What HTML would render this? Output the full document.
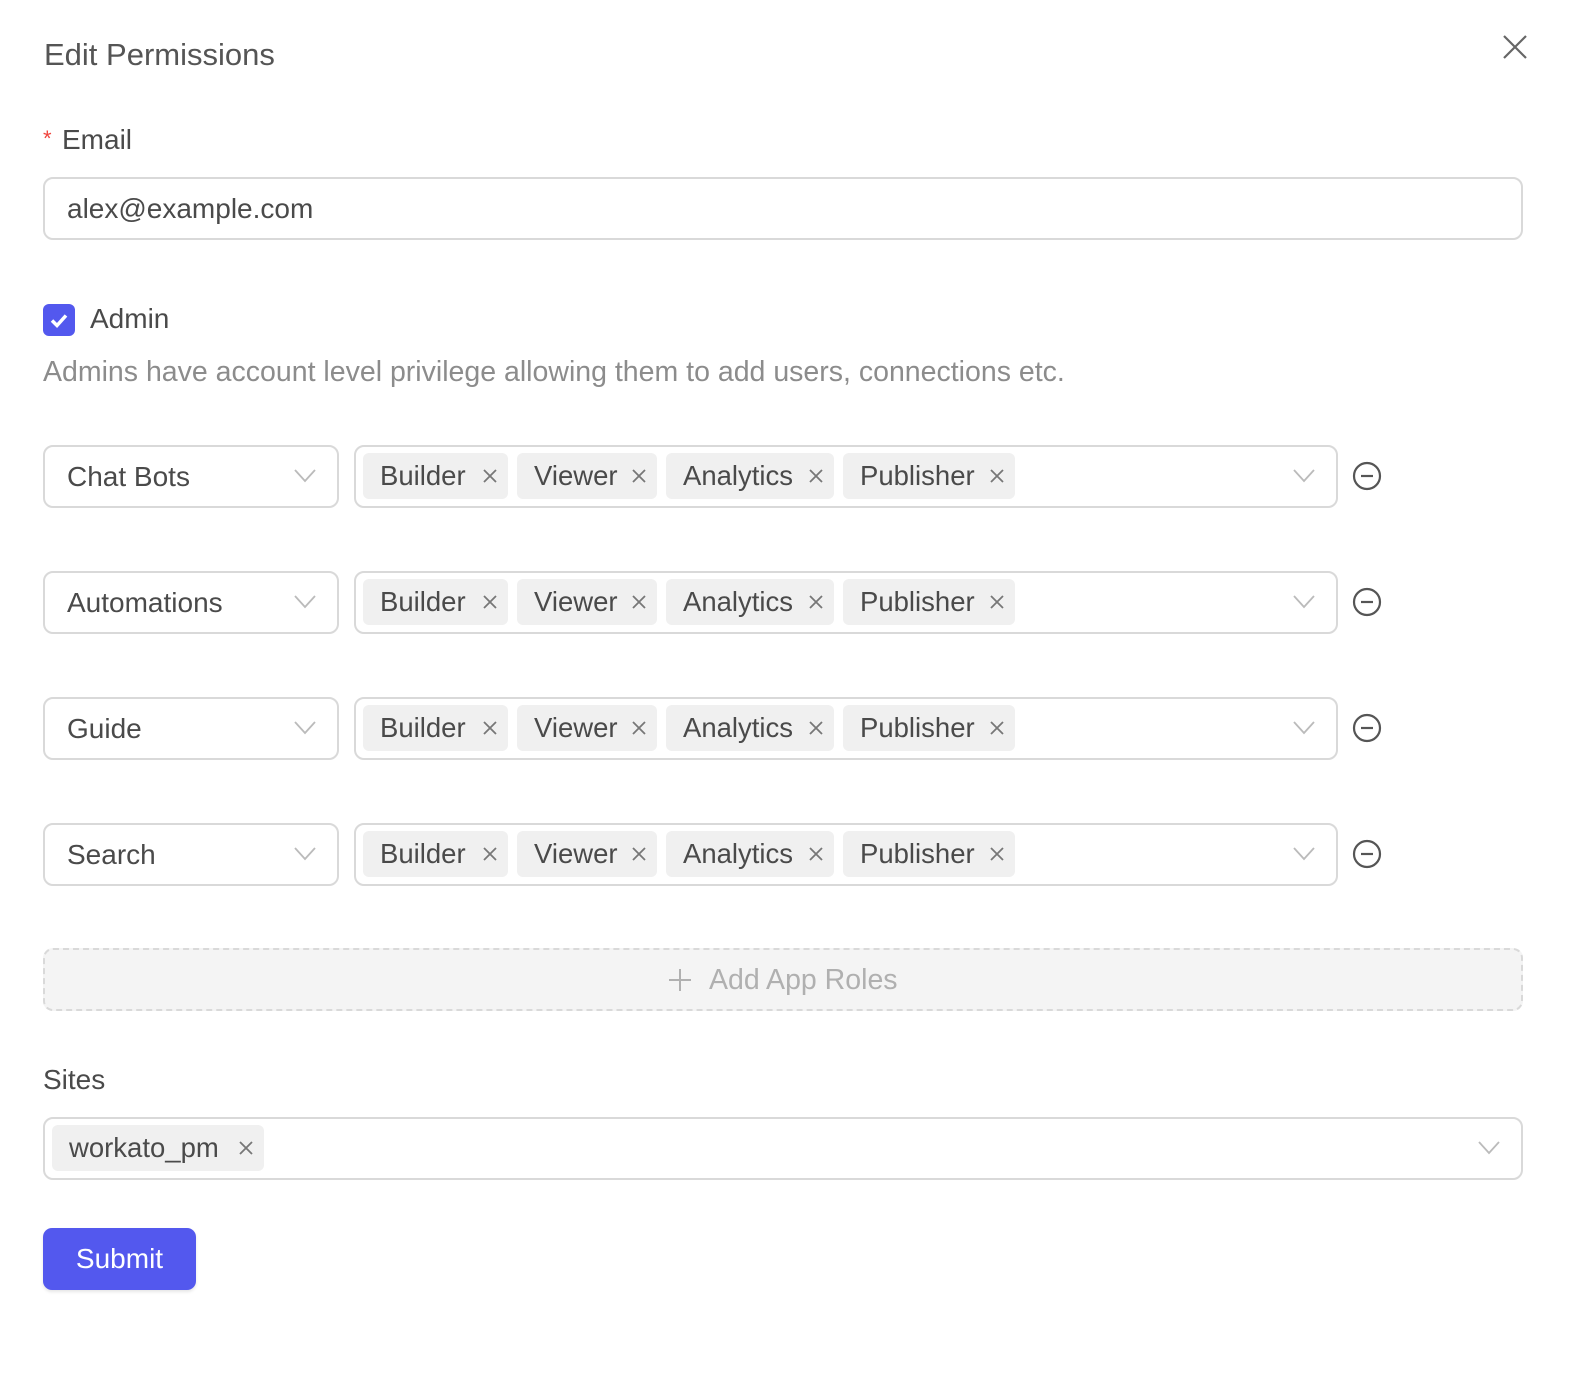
<!DOCTYPE html>
<html><head><meta charset="utf-8"><style>
*{box-sizing:border-box;margin:0;padding:0}
body{width:1594px;height:1394px;background:#fff;font-family:"Liberation Sans",sans-serif;color:#4a4a4a;position:relative;overflow:hidden}
.a{position:absolute}
.t{font-size:28px;line-height:1;white-space:nowrap}
.box{position:absolute;border:2px solid #d9d9d9;border-radius:10px;background:#fff}
.tag{position:absolute;height:46px;background:#f0f0f0;border-radius:6px;font-size:27.5px;line-height:46px;padding-left:17px;color:#4a4a4a;white-space:nowrap}
.tag svg{position:absolute;right:10px;top:15px}
.chev{position:absolute}
</style></head><body>
<div class="a t" style="left:44px;top:39px;font-size:31px;color:#555">Edit Permissions</div>
<svg class="a" style="left:1502px;top:34px" width="26" height="26" viewBox="0 0 26 26"><path d="M2 2L24 24M24 2L2 24" stroke="#666" stroke-width="2.2" fill="none"/></svg>
<div class="a t" style="left:43px;top:128px;color:#f0443d;font-size:22px">*</div>
<div class="a t" style="left:62px;top:126px">Email</div>
<div class="box" style="left:43px;top:177px;width:1480px;height:63px"></div>
<div class="a t" style="left:67px;top:195px">alex@example.com</div>
<div class="a" style="left:43px;top:304px;width:32px;height:32px;background:#5358ee;border-radius:6px"></div>
<svg class="a" style="left:43px;top:304px" width="32" height="32"><path d="M9 16.5l5 5 9-10" stroke="#fff" stroke-width="3.5" fill="none"/></svg>
<div class="a t" style="left:90px;top:305px">Admin</div>
<div class="a t" style="left:43px;top:358px;color:#8c8c8c;font-size:28.5px">Admins have account level privilege allowing them to add users, connections etc.</div>

<div id="rows"></div>
<script>
var names=["Chat Bots","Automations","Guide","Search"],tops=[445,571,697,823],h="";
var tags=[["Builder",363,145],["Viewer",517,140],["Analytics",666,168],["Publisher",843,172]];
var x='<svg width="16" height="16"><path d="M2 2L14 14M14 2L2 14" stroke="#777" stroke-width="1.8"/></svg>';
var ch='<svg width="22" height="14"><path d="M1 1L11 12L21 1" stroke="#bbb" stroke-width="1.8" fill="none"/></svg>';
for(var i=0;i<4;i++){var t=tops[i];
h+='<div class="box" style="left:43px;top:'+t+'px;width:296px;height:63px"></div>';
h+='<div class="a t" style="left:67px;top:'+(t+18)+'px">'+names[i]+'</div>';
h+='<div class="chev" style="left:294px;top:'+(t+24)+'px">'+ch+'</div>';
h+='<div class="box" style="left:354px;top:'+t+'px;width:984px;height:63px"></div>';
for(var j=0;j<4;j++)h+='<div class="tag" style="left:'+tags[j][1]+'px;top:'+(t+8)+'px;width:'+tags[j][2]+'px">'+tags[j][0]+x+'</div>';
h+='<div class="chev" style="left:1293px;top:'+(t+24)+'px">'+ch+'</div>';
h+='<svg class="a" style="left:1352px;top:'+(t+16)+'px" width="30" height="30"><circle cx="15" cy="15" r="13" stroke="#555" stroke-width="2.2" fill="none"/><path d="M9 15H21" stroke="#555" stroke-width="2.2"/></svg>';
}
document.getElementById("rows").innerHTML=h;
</script>

<div class="a" style="left:43px;top:948px;width:1480px;height:63px;border:2px dashed #d9d9d9;border-radius:10px;background:#f4f4f4"></div>
<svg class="a" style="left:668px;top:968px" width="24" height="24"><path d="M12 1V23M1 12H23" stroke="#b0b0b0" stroke-width="2"/></svg>
<div class="a t" style="left:709px;top:966px;color:#b0b0b0;font-size:28.5px">Add App Roles</div>

<div class="a t" style="left:43px;top:1066px">Sites</div>
<div class="box" style="left:43px;top:1117px;width:1480px;height:63px"></div>
<div class="tag" style="left:52px;top:1125px;width:212px">workato_pm<svg width="16" height="16"><path d="M2 2L14 14M14 2L2 14" stroke="#777" stroke-width="1.8"/></svg></div>
<div class="chev" style="left:1478px;top:1141px"><svg width="22" height="14"><path d="M1 1L11 12L21 1" stroke="#bbb" stroke-width="1.8" fill="none"/></svg></div>

<div class="a" style="left:43px;top:1228px;width:153px;height:62px;background:#5358ee;border-radius:9px;box-shadow:0 2px 3px rgba(0,0,0,.1)"></div>
<div class="a t" style="left:43px;top:1245px;width:153px;text-align:center;color:#fff;font-size:28px">Submit</div>
</body></html>
